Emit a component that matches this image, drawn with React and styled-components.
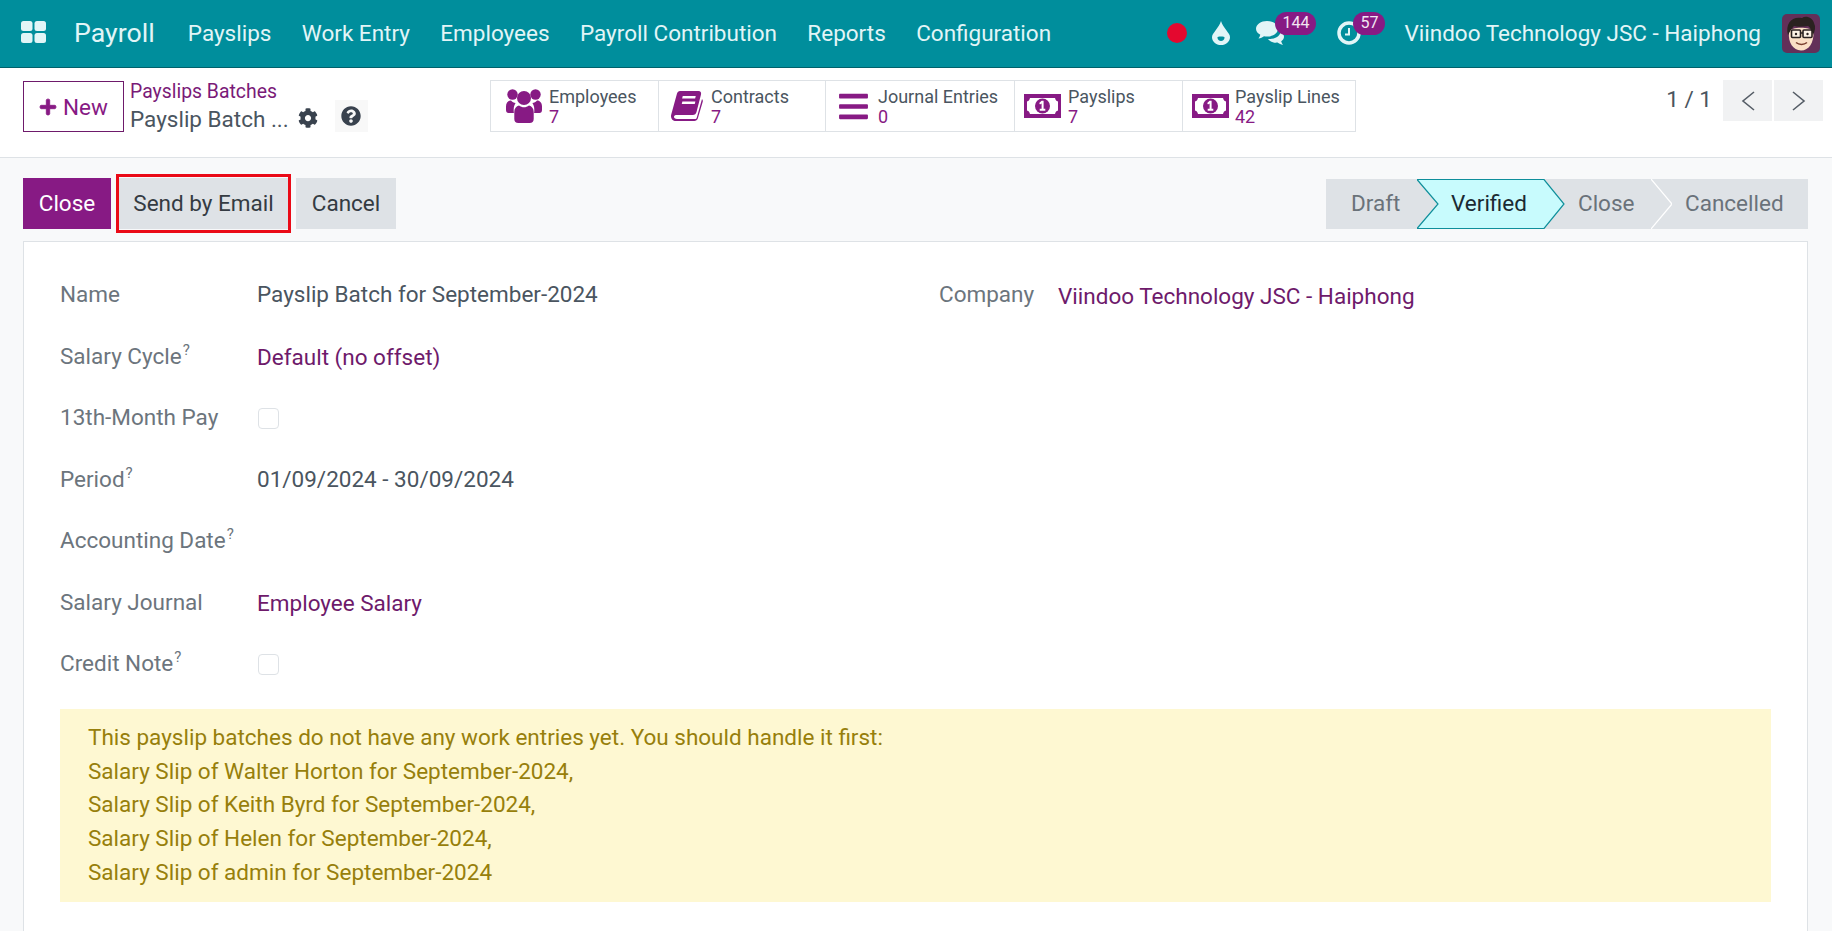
import React from 'react';
import styled, { createGlobalStyle } from 'styled-components';
import { FaCog, FaPlus, FaQuestionCircle, FaBars } from 'react-icons/fa';

const GlobalStyle = createGlobalStyle`
    html, body {
        margin: 0;
        height: 100%;
        overflow: hidden;
        background: #f8f9fa;
        font-family: Roboto, 'Liberation Sans', sans-serif;
        font-size: 22.5px;
        color: #4a5560;
    }
    * { box-sizing: border-box; }
`;

const Page = styled.div`
    height: 931px;
    display: flex;
    flex-direction: column;
    overflow: hidden;
`;

const Navbar = styled.header`
    height: 68px;
    flex: none;
    display: flex;
    align-items: center;
    background: #008e9c;
    border-bottom: 1px solid #00616b;
    color: #e2f5f7;
    padding: 0 12px 1px 21px;
`;

const AppGrid = styled.svg`
    width: 25px;
    height: 22px;
    margin-top: -3px;
`;

const Brand = styled.span`
    font-size: 26.7px;
    margin-left: 28px;
    margin-right: 18px;
`;

const NavMenu = styled.nav`
    display: flex;
`;

const NavItem = styled.a`
    padding: 0 15.2px;
    font-size: 22.5px;
`;

const Systray = styled.div`
    margin-left: auto;
    display: flex;
    align-items: center;
`;

const RecordDot = styled.span`
    width: 20px;
    height: 20px;
    border-radius: 50%;
    background: #e4082f;
    margin-right: 25px;
`;

const TrayIcon = styled.span`
    position: relative;
    display: flex;
    align-items: center;
    width: ${props => props.width}px;
    height: 26px;
    margin-right: ${props => props.gap}px;
`;

const Badge = styled.span`
    position: absolute;
    left: ${props => props.left}px;
    top: -8px;
    height: 23px;
    min-width: 30px;
    padding: 0 7px;
    border-radius: 12px;
    background: #871a84;
    color: #f2e6f2;
    font-size: 16px;
    line-height: 22px;
    text-align: center;
`;

const CompanyName = styled.span`
    font-size: 22.5px;
    margin-right: 21px;
`;

const Avatar = styled.svg`
    width: 38px;
    height: 39px;
    border-radius: 5px;
`;

const ControlPanel = styled.section`
    height: 90px;
    flex: none;
    background: #fff;
    border-bottom: 1px solid #dee2e6;
    display: flex;
    align-items: flex-start;
    padding: 12px 9px 0 23px;
`;

const NewButton = styled.button`
    width: 101px;
    height: 51px;
    margin-top: 1px;
    display: flex;
    align-items: center;
    justify-content: center;
    gap: 6px;
    background: #fff;
    border: 1px solid #6e1a6b;
    color: #871a84;
    font: inherit;
    font-size: 22.5px;
    padding: 0;
    svg {
        width: 18px;
        height: 18px;
        stroke: currentColor;
        stroke-width: 24px;
    }
`;

const Breadcrumbs = styled.div`
    width: 360px;
    margin-left: 6px;
`;

const Crumb = styled.a`
    display: block;
    color: #7a1a78;
    font-size: 19.4px;
    line-height: 22px;
    margin-top: 1px;
`;

const RecordLine = styled.div`
    display: flex;
    align-items: center;
    font-size: 22.5px;
    line-height: 32px;
`;

const GearIcon = styled(FaCog)`
    width: 20px;
    height: 20px;
    margin-left: 9px;
    margin-top: -3px;
    color: #39424e;
`;

const HelpButton = styled.span`
    width: 33px;
    height: 32px;
    margin-left: 17px;
    margin-top: -6px;
    display: flex;
    align-items: center;
    justify-content: center;
    background: #f8f8f8;
    color: #39424e;
    svg { width: 20px; height: 20px; }
`;

const StatBox = styled.div`
    display: flex;
    height: 52px;
    border: 1px solid #dee2e6;
`;

const StatButton = styled.a`
    width: ${props => props.width}px;
    display: flex;
    align-items: center;
    padding-left: ${props => props.pad}px;
    border-left: 1px solid #dee2e6;
    &:first-child { border-left: 0; }
`;

const StatIcon = styled.span`
    width: ${props => props.width}px;
    display: flex;
    align-items: center;
    color: #871a84;
    flex: none;
    svg { display: block; }
`;

const StatText = styled.span`
    display: flex;
    flex-direction: column;
    font-size: 18px;
    line-height: 20px;
    white-space: nowrap;
    margin-top: 1px;
    b { font-weight: 400; color: #871a84; }
`;

const Pager = styled.div`
    margin-left: auto;
    display: flex;
    align-items: center;
    height: 41px;
    font-size: 22.5px;
`;

const PagerCount = styled.span`
    margin-right: 11px;
    padding-bottom: 3px;
`;

const PagerButton = styled.span`
    width: 49px;
    height: 41px;
    margin-left: ${props => props.gap}px;
    display: flex;
    align-items: center;
    justify-content: center;
    background: #f1f2f3;
    color: #555d66;
`;

const ActionBar = styled.div`
    flex: none;
    height: 83px;
    display: flex;
    align-items: flex-start;
    padding: 20px 24px 0 23px;
`;

const ActionButton = styled.button`
    height: 51px;
    width: ${props => props.width}px;
    margin-left: ${props => props.gap || 0}px;
    background: ${props => props.primary ? '#871a84' : '#dee2e6'};
    color: ${props => props.primary ? '#fff' : '#343b42'};
    border: 0;
    padding: 0 0 2px;
    font: inherit;
    font-size: 22.5px;
`;

const Highlight = styled.span`
    position: relative;
    display: flex;
    margin-left: 8px;
    &::after {
        content: '';
        position: absolute;
        inset: -4px -3px -4px -3px;
        border: 3px solid #ea0a17;
    }
`;

const StatusBar = styled.div`
    margin-left: auto;
    margin-top: 1px;
    height: 50px;
    display: flex;
    background: #dee2e6;
`;

const Step = styled.div`
    position: relative;
    width: ${props => props.width}px;
    padding: 0 0 2px ${props => props.pad}px;
    display: flex;
    align-items: center;
    font-size: 22.5px;
    color: ${props => props.active ? '#1b2a33' : '#6a727a'};
    span { position: relative; z-index: 2; }
`;

const StepArrow = styled.svg`
    position: absolute;
    top: 0;
    right: -21px;
    width: 21px;
    height: 50px;
    z-index: 1;
`;

const StepFill = styled.svg`
    position: absolute;
    top: 0;
    left: 0;
    width: 148px;
    height: 50px;
    z-index: 1;
`;

const Sheet = styled.main`
    flex: 1;
    margin: 0 24px 0 23px;
    background: #fff;
    border: 1px solid #dee2e6;
    border-bottom: 0;
    padding: 21.5px 36px 0;
`;

const FormGrid = styled.div`
    display: grid;
    grid-template-columns: 879px 1fr;
`;

const Group = styled.div`
    display: flex;
    flex-direction: column;
`;

const Row = styled.div`
    height: 61.5px;
    display: flex;
    align-items: center;
`;

const Label = styled.div`
    width: ${props => props.width}px;
    flex: none;
    color: #6c757d;
    font-size: 22.5px;
    sup {
        font-size: 15px;
        line-height: 0;
        vertical-align: 9px;
        margin-left: 1px;
    }
`;

const Value = styled.div`
    font-size: 22.5px;
    color: ${props => props.link ? '#6e1a6b' : '#4a5560'};
    margin-top: ${props => props.link ? 3 : 0}px;
`;

const CheckBox = styled.span`
    width: 21px;
    height: 21px;
    margin: 2px 0 0 1px;
    background: #fff;
    border: 1px solid #dee2e6;
    border-radius: 4px;
`;

const Alert = styled.div`
    margin-top: 15px;
    padding: 12px 28px;
    background: #fef8d2;
    color: #977f0b;
    font-size: 22.5px;
    line-height: 33.7px;
`;

const Users = () => (
    <svg width="36" height="34" viewBox="0 0 36 34" fill="currentColor">
        <circle cx="6.5" cy="5.5" r="5.2" />
        <circle cx="29.5" cy="5.5" r="5.2" />
        <circle cx="18" cy="9" r="7" />
        <path d="M5 11.5c1.2 1.5 2.8 2.3 4.6 2.6-1 1.5-1.8 3.5-1.9 6.2-.1 1.2 0 2.6.2 3.7H2.5C1 24 0 23 0 21v-3.5c0-3.5 2-6 5-6z" />
        <path d="M31 11.5c-1.2 1.5-2.8 2.3-4.6 2.6 1 1.5 1.8 3.5 1.9 6.2.1 1.2 0 2.6-.2 3.7h5.4c1.5 0 2.5-1 2.5-3v-3.5c0-3.5-2-6-5-6z" />
        <path d="M13 16.5c1.5 1.2 3.2 1.8 5 1.8s3.5-.6 5-1.8c2.8.5 4.7 3 4.7 6.5v7c0 2.5-1.5 4-4 4H12.3c-2.5 0-4-1.5-4-4v-7c0-3.5 1.9-6 4.7-6.5z" />
    </svg>
);

const Book = () => (
    <svg width="32" height="30" viewBox="0 0 32 30" fill="currentColor">
        <path d="M9 0h18.5c2 0 3 1.5 2.5 3.5L25.5 21c-.6 2-1.6 3-3.8 3H6c-2 0-3 .5-3 1.8S4 28 6 28h18c1 0 1.5-.5 1.8-1.5L31 8c.4.5 1 1.2.8 2.5l-5 17c-.5 1.6-1.8 2.5-3.5 2.5H5c-3 0-5-2-5-5 0-.6.1-1.2.3-1.8L6 2.5C6.5 1 7.500 0 9 0z" />
        <rect x="11" y="5" width="13" height="2.6" fill="#fff" transform="skewX(-14) translate(2 0)" />
        <rect x="11" y="10.5" width="13" height="2.6" fill="#fff" transform="skewX(-14) translate(3 0)" />
    </svg>
);

const Money = () => (
    <svg width="37" height="24" viewBox="0 0 37 24">
        <rect width="37" height="24" fill="#871a84" />
        <path d="M6 4h25c.4 2 1.5 3.2 3 3.5v9c-1.5.3-2.6 1.5-3 3.5H6c-.4-2-1.5-3.2-3-3.5v-9C4.5 7.2 5.6 6 6 4z" fill="#fff" />
        <circle cx="18.5" cy="12" r="7.5" fill="#871a84" />
        <path d="M17.6 6.8h2v8h1.700v1.900h-5.600v-1.900h1.900V9.600l-1.600.9-.8-1.500z" fill="#fff" />
    </svg>
);

const Chevron = ({ dir }) => (
    <svg width="14" height="20" viewBox="0 0 14 20" fill="none" stroke="currentColor" strokeWidth="1.6">
        <polyline points={dir === 'left' ? '13,1 2,10 13,19' : '1,1 12,10 1,19'} />
    </svg>
);

const fields = [
    { label: 'Name', value: 'Payslip Batch for September-2024' },
    { label: 'Salary Cycle', help: true, value: 'Default (no offset)', link: true },
    { label: '13th-Month Pay', check: true },
    { label: 'Period', help: true, value: '01/09/2024 - 30/09/2024' },
    { label: 'Accounting Date', help: true },
    { label: 'Salary Journal', value: 'Employee Salary', link: true },
    { label: 'Credit Note', help: true, check: true },
];

const stats = [
    { width: 167, pad: 15, iconWidth: 43, icon: <Users />, label: 'Employees', value: 7 },
    { width: 167, pad: 12, iconWidth: 40, icon: <Book />, label: 'Contracts', value: 7 },
    { width: 189, pad: 11, iconWidth: 41, icon: <FaBars size={33} />, label: 'Journal Entries', value: 0 },
    { width: 168, pad: 9, iconWidth: 44, icon: <Money />, label: 'Payslips', value: 7 },
    { width: 173, pad: 9, iconWidth: 43, icon: <Money />, label: 'Payslip Lines', value: 42 },
];

const warnings = [
    'This payslip batches do not have any work entries yet. You should handle it first:',
    'Salary Slip of Walter Horton for September-2024,',
    'Salary Slip of Keith Byrd for September-2024,',
    'Salary Slip of Helen for September-2024,',
    'Salary Slip of admin for September-2024',
];

export default function App() {
    return (
        <Page>
            <GlobalStyle />
            <Navbar>
                <AppGrid viewBox="0 0 25 22" fill="currentColor">
                    <rect width="11.5" height="10" rx="2.5" />
                    <rect x="13.5" width="11.5" height="10" rx="2.5" />
                    <rect y="12" width="11.5" height="10" rx="2.5" />
                    <rect x="13.5" y="12" width="11.5" height="10" rx="2.5" />
                </AppGrid>
                <Brand>Payroll</Brand>
                <NavMenu>
                    {['Payslips', 'Work Entry', 'Employees', 'Payroll Contribution', 'Reports', 'Configuration'].map(item => (
                        <NavItem key={item}>{item}</NavItem>
                    ))}
                </NavMenu>
                <Systray>
                    <RecordDot />
                    <TrayIcon width={18} gap={26}>
                        <svg width="18" height="24" viewBox="0 0 18 24">
                            <path d="M9 0c1 3.5 3 6 5.5 9.5C16.5 12.3 18 14 18 16.2 18 20.5 14 24 9 24s-9-3.5-9-7.8c0-2.2 1.5-3.9 3.5-6.7C6 6 8 3.5 9 0z" fill="currentColor" />
                            <path d="M5.5 16.5c0 2 1.5 3.5 3.5 3.5s3.5-1.5 3.5-3.5c0-1-1.2-1-3.5-1s-3.5 0-3.5 1z" fill="#008e9c" />
                        </svg>
                    </TrayIcon>
                    <TrayIcon width={28} gap={53}>
                        <svg width="28" height="24" viewBox="0 0 28 24" fill="currentColor">
                            <path d="M11 0c6 0 11 3.4 11 7.8s-5 7.8-11 7.8c-1 0-2-.1-3-.3-1.5 1.2-3.5 2-5.5 2.3.8-1 1.5-2.3 1.8-3.8C1.6 12.4 0 10.2 0 7.8 0 3.4 5 0 11 0z" />
                            <path d="M24.5 11c2 1 3.5 2.7 3.5 4.7 0 1.8-1 3.4-2.8 4.5.3 1.4 1 2.7 1.8 3.7-2-.3-4-1.2-5.5-2.4-2.8.5-7-.2-9.5-3.5 6 .5 12-2.5 12.5-7z" />
                        </svg>
                        <Badge left={19}>144</Badge>
                    </TrayIcon>
                    <TrayIcon width={24} gap={43}>
                        <svg width="24" height="24" viewBox="0 0 24 24" fill="none" stroke="currentColor">
                            <circle cx="12" cy="12" r="10" strokeWidth="3.5" />
                            <path d="M12 7v6.5H8" strokeWidth="2" />
                        </svg>
                        <Badge left={16}>57</Badge>
                    </TrayIcon>
                    <CompanyName>Viindoo Technology JSC - Haiphong</CompanyName>
                    <Avatar viewBox="0 0 38 39">
                        <rect width="38" height="39" fill="#633059" />
                        <path d="M7 18c-1 11 4 18 12 18.5 8 0 13-8 12.5-18.5-2-5-22-6-24.500 0z" fill="#fae0c6" />
                        <path d="M6 21C3 9 10 2 20 4c4-3 11 0 12 5 2 4 1 8-1 12-1-4-3-8-5-9-5 1-11 1-14 0-2 2-4 5-6 9z" fill="#2a2220" />
                        <rect x="9.5" y="16" width="9" height="7.5" rx="1" fill="#fdf3e6" stroke="#2a2220" strokeWidth="1.6" />
                        <rect x="21" y="16" width="9" height="7.5" rx="1" fill="#fdf3e6" stroke="#2a2220" strokeWidth="1.6" />
                        <path d="M18.5 19h2.5" stroke="#2a2220" strokeWidth="1.5" />
                        <circle cx="14" cy="20" r="1.2" fill="#2a2220" />
                        <circle cx="25.5" cy="20" r="1.2" fill="#2a2220" />
                        <path d="M14 28.5c3 2.5 8 2.5 11 0" fill="none" stroke="#7a4030" strokeWidth="1.5" />
                    </Avatar>
                </Systray>
            </Navbar>

            <ControlPanel>
                <NewButton><FaPlus />New</NewButton>
                <Breadcrumbs>
                    <Crumb>Payslips Batches</Crumb>
                    <RecordLine>
                        Payslip Batch ...
                        <GearIcon />
                        <HelpButton><FaQuestionCircle /></HelpButton>
                    </RecordLine>
                </Breadcrumbs>
                <StatBox>
                    {stats.map(stat => (
                        <StatButton key={stat.label} width={stat.width} pad={stat.pad}>
                            <StatIcon width={stat.iconWidth}>{stat.icon}</StatIcon>
                            <StatText>
                                {stat.label}
                                <b>{stat.value}</b>
                            </StatText>
                        </StatButton>
                    ))}
                </StatBox>
                <Pager>
                    <PagerCount>1 / 1</PagerCount>
                    <PagerButton gap={0}><Chevron dir="left" /></PagerButton>
                    <PagerButton gap={2}><Chevron dir="right" /></PagerButton>
                </Pager>
            </ControlPanel>

            <ActionBar>
                <ActionButton primary width={88}>Close</ActionButton>
                <Highlight><ActionButton width={169}>Send by Email</ActionButton></Highlight>
                <ActionButton width={100} gap={8}>Cancel</ActionButton>
                <StatusBar>
                    <Step width={91} pad={25}>
                        <span>Draft</span>
                    </Step>
                    <Step active width={127} pad={34}>
                        <StepFill viewBox="0 0 148 50">
                            <path d="M0 .5H127L147 25 127 49.5H0L21 25z" fill="#c8fbfd" stroke="#0f8f9b" strokeWidth="1.2" />
                        </StepFill>
                        <span>Verified</span>
                    </Step>
                    <Step width={107} pad={34}>
                        <span>Close</span>
                        <StepArrow viewBox="0 0 21 50">
                            <path d="M0 0L21 25 0 50z" fill="#dee2e6" />
                            <path d="M0 0L21 25 0 50" fill="none" stroke="#fff" strokeWidth="1.2" />
                        </StepArrow>
                    </Step>
                    <Step width={157} pad={34}>
                        <span>Cancelled</span>
                    </Step>
                </StatusBar>
            </ActionBar>

            <Sheet>
                <FormGrid>
                    <Group>
                        {fields.map(field => (
                            <Row key={field.label}>
                                <Label width={197}>
                                    {field.label}
                                    {field.help && <sup>?</sup>}
                                </Label>
                                {field.check ? <CheckBox /> : <Value link={field.link}>{field.value}</Value>}
                            </Row>
                        ))}
                    </Group>
                    <Group>
                        <Row>
                            <Label width={119}>Company</Label>
                            <Value link>Viindoo Technology JSC - Haiphong</Value>
                        </Row>
                    </Group>
                </FormGrid>
                <Alert>
                    {warnings.map(line => <div key={line}>{line}</div>)}
                </Alert>
            </Sheet>
        </Page>
    );
}
